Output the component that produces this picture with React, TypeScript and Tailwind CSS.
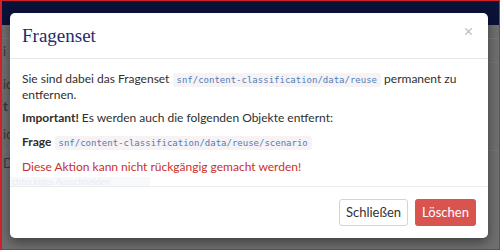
import { X } from 'lucide-react';

const sans = { fontFamily: 'Lato, "Open Sans", sans-serif' };
const mono = { fontFamily: '"DejaVu Sans Mono", monospace' };

export default function App() {
  return (
    <div className="relative w-[500px] h-[250px] overflow-hidden bg-[#6f6f6f] border-t border-r border-b border-l-2 border-[#d0202a]" style={sans}>
      {/* page behind the dialog */}
      <div className="h-[24px] bg-[#0b1238]" />
      <div className="flex flex-col text-[13px] text-[#3a3a3a] pl-[1px]">
        <div className="h-[14px] border-b border-[#7a7a7a]" />
        <div className="h-[24px] leading-[24px] border-b border-[#767676]">i</div>
        <div className="h-[10px]" />
        <div className="h-[22px] leading-[22px]">ic</div>
        <div className="h-[22px] leading-[22px] font-bold">t</div>
        <div className="h-[34px] leading-[34px] border-b border-[#767676]">ic</div>
        <div className="h-[24px] leading-[24px]">D</div>
      </div>

      {/* dialog */}
      <div className="absolute left-[8px] top-[12px] w-[478px] h-[225px] bg-white rounded-[5px] shadow-[0_4px_12px_rgba(0,0,0,0.45)] flex flex-col">
        <div className="h-[46px] px-3 flex items-center justify-between border-b border-[#e8e8e8]">
          <h1 className="text-[19px] text-[#1f2b6e] pt-[1px]" style={{ fontFamily: '"Liberation Serif", serif' }}>Fragenset</h1>
          <button className="text-[#c4c4c4] mr-[2px] mt-[-8px]"><X size={11} strokeWidth={3} /></button>
        </div>

        <div className="relative flex-1 px-3 pt-3 text-[12px] leading-[16px] text-[#2f2f2f] border-b border-[#ececec]">
          <p>
            Sie sind dabei das Fragenset{' '}
            <code className="inline-block leading-[14px] text-[9px] text-[#4f7fb8] bg-[#f7f2f4] rounded-[3px] px-[4px]" style={mono}>snf/content-classification/data/reuse</code>{' '}
            permanent zu entfernen.
          </p>
          <p className="mt-[7px]"><b>Important!</b> Es werden auch die folgenden Objekte entfernt:</p>
          <p className="mt-[8px]">
            <b>Frage</b>{' '}
            <code className="inline-block leading-[14px] text-[9px] text-[#4f7fb8] bg-[#f7f2f4] rounded-[3px] px-[4px]" style={mono}>snf/content-classification/data/reuse/scenario</code>
          </p>
          <p className="mt-[9px] text-[#c9302c]">Diese Aktion kann nicht rückgängig gemacht werden!</p>
          <div className="absolute left-0 top-[118px] w-[140px] h-[9px] bg-[#f7f9fc] text-[9px] leading-[9px] text-[#e9ecf2] pl-[2px]">chteckiges Ausschneiden</div>
        </div>

        <div className="h-[51px] px-3 flex items-center justify-end gap-[7px]">
          <button className="h-[27px] w-[69px] rounded-[3px] border border-[#d4d4d4] bg-white text-[13px] text-[#333]">Schließen</button>
          <button className="h-[27px] w-[61px] rounded-[3px] bg-[#d9534f] text-[13px] text-white">Löschen</button>
        </div>
      </div>
    </div>
  );
}
